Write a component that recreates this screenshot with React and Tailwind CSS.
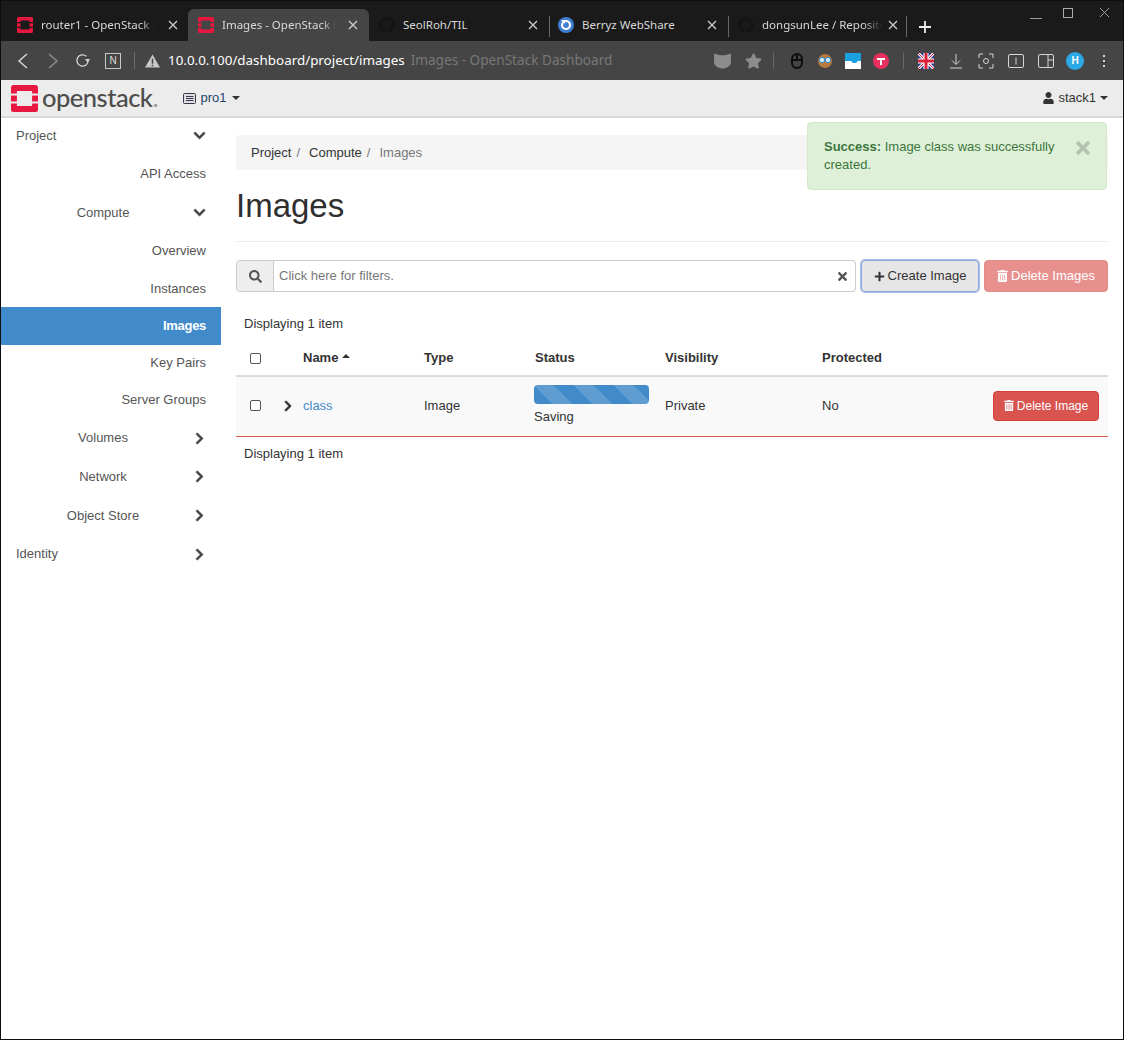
import React from "react";
import {
  FaChevronDown,
  FaChevronRight,
  FaSearch,
  FaTimes,
  FaPlus,
  FaTrashAlt,
  FaUser,
  FaGithub,
  FaStar,
} from "react-icons/fa";

const StackLogo = ({ className }) => (
  <svg viewBox="0 0 32 32" className={className} fill="#e8173f">
    <path d="M3 0H29a3 3 0 0 1 3 3V10H25V7H7V10H0V3a3 3 0 0 1 3-3Z" />
    <path d="M3 32H29a3 3 0 0 0 3-3V22H25V25H7V22H0V29a3 3 0 0 0 3 3Z" />
    <rect x="0" y="12.5" width="7" height="7" />
    <rect x="25" y="12.5" width="7" height="7" />
  </svg>
);

const Close = ({ className }) => (
  <svg viewBox="0 0 12 12" className={className} stroke="#c9c9c9" strokeWidth="1.4" fill="none">
    <path d="M2 2L10 10M10 2L2 10" />
  </svg>
);

const Berryz = () => (
  <svg viewBox="0 0 16 16" className="w-4 h-4">
    <circle cx="8" cy="8" r="8" fill="#3f7fd0" />
    <circle cx="8" cy="8" r="4" fill="none" stroke="#fff" strokeWidth="2.2" />
    <path d="M3 3h4v4z" fill="#fff" />
  </svg>
);

const Tab = ({ icon, title, active, className, textWidth }) => (
  <div
    className={`relative flex items-center h-8 rounded-t-md ${active ? "bg-[#454545]" : ""} ${className}`}
  >
    <span className="flex items-center justify-center w-4 h-4 shrink-0">{icon}</span>
    <span
      className={`ml-2 whitespace-nowrap overflow-hidden text-[11.5px] text-[#d8d8d8] [font-family:'Noto_Sans',sans-serif] ${textWidth}`}
    >
      {title}
    </span>
  </div>
);

const leafClass = "flex items-center justify-end pr-[15px] text-[#555]";

const Section = ({ label, h, open, left }) => (
  <div className={`relative flex items-center ${h} text-[#555]`}>
    {left ? (
      <span className="pl-[15px]">{label}</span>
    ) : (
      <span className="w-[204px] text-center">{label}</span>
    )}
    <span className="absolute left-[192px] text-[#444]">
      {open ? (
        <FaChevronDown className="w-[13px] h-[13px] stroke-current stroke-[25]" />
      ) : (
        <FaChevronRight className="w-[13px] h-[13px] stroke-current stroke-[25]" />
      )}
    </span>
  </div>
);

const Sidebar = () => (
  <aside className="w-[220px] shrink-0">
    <Section label="Project" h="h-[35px]" open left />
    <div className={`${leafClass} h-[41px]`}>API Access</div>
    <Section label="Compute" h="h-[37px]" open />
    <div className={`${leafClass} h-[40px]`}>Overview</div>
    <div className={`${leafClass} h-[36px]`}>Instances</div>
    <div className="flex items-center justify-end pr-[15px] h-[38px] bg-[#428bca] text-white font-bold tracking-[-0.3px]">Images</div>
    <div className={`${leafClass} h-[36px]`}>Key Pairs</div>
    <div className={`${leafClass} h-[37px]`}>Server Groups</div>
    <Section label="Volumes" h="h-[40px]" />
    <Section label="Network" h="h-[37px]" />
    <Section label="Object Store" h="h-[41px]" />
    <Section label="Identity" h="h-[36px]" left />
  </aside>
);

const Checkbox = () => (
  <span className="block w-[11px] h-[11px] border border-[#555] rounded-[2px] bg-white" />
);

const Caret = ({ className }) => (
  <span className={`inline-block w-0 h-0 border-x-4 border-t-4 border-x-transparent border-t-[#333] ${className}`} />
);

const Toolbar = () => (
  <div className="relative flex items-center h-[39px] bg-[#454545] text-[#ddd]">
    <svg viewBox="0 0 12 18" className="w-[12px] h-[18px] ml-[16px]" fill="none" stroke="#d5d5d5" strokeWidth="1.5">
      <path d="M10 2L2 9L10 16" />
    </svg>
    <svg viewBox="0 0 12 18" className="w-[12px] h-[18px] ml-[18px]" fill="none" stroke="#8d8d8d" strokeWidth="1.5">
      <path d="M2 2L10 9L2 16" />
    </svg>
    <svg viewBox="0 0 18 18" className="w-[17px] h-[17px] ml-[15px]" fill="none" stroke="#d5d5d5" strokeWidth="1.4">
      <path d="M15 9a6 6 0 1 1-2-4.5" />
      <path d="M11.5 7.5H17L14.5 11z" fill="#d5d5d5" stroke="none" />
    </svg>
    <span className="ml-[14px] w-[16px] h-[16px] border border-[#c8c8c8] flex items-center justify-center text-[10px] [font-family:'Liberation_Sans',sans-serif]">
      N
    </span>
    <span className="ml-[13px] w-px h-[17px] bg-[#6c6c6c]" />
    <svg viewBox="0 0 16 14" className="ml-[10px] w-[15px] h-[14px]">
      <path d="M8 0L16 14H0Z" fill="#c8c8c8" />
      <path d="M7.2 4.5h1.6V10H7.2zM7.2 11h1.6v1.5H7.2z" fill="#454545" />
    </svg>
    <span className="ml-[8px] whitespace-nowrap text-[13.4px] text-white [font-family:'Noto_Sans',sans-serif]">
      10.0.0.100/dashboard/project/images
    </span>
    <span className="ml-[6px] whitespace-nowrap text-[13.6px] text-[#777] [font-family:'Noto_Sans',sans-serif]">
      Images - OpenStack Dashboard
    </span>
    <div className="ml-auto flex items-center mr-[18px]">
      <svg viewBox="0 0 18 16" className="w-[17px] h-[16px]">
        <path d="M0 0C3 1 6 2 9 2S15 1 18 0V9C18 13 13 16 9 16S0 13 0 9Z" fill="#8c8c8c" />
      </svg>
      <FaStar className="ml-[14px] w-[17px] h-[16px] text-[#8c8c8c]" />
      <span className="ml-[11px] w-px h-[17px] bg-[#666]" />
      <svg viewBox="0 0 12 16" className="ml-[17px] w-[12px] h-[16px]" fill="none" stroke="#0d0d0d" strokeWidth="2">
        <rect x="1" y="1" width="10" height="14" rx="5" />
        <path d="M6 1V7M1 7H11" />
      </svg>
      <svg viewBox="0 0 16 16" className="ml-[14px] w-[16px] h-[16px]">
        <circle cx="8" cy="8" r="7" fill="#b8793d" />
        <circle cx="5" cy="7" r="2.6" fill="#d9eefa" stroke="#2d8bd0" />
        <circle cx="11" cy="7" r="2.6" fill="#d9eefa" stroke="#2d8bd0" />
      </svg>
      <svg viewBox="0 0 16 16" className="ml-[12px] w-[16px] h-[16px]">
        <rect width="16" height="16" fill="#1ba1e2" />
        <path d="M0 8H6L8 10H11L13 8H16V16H0Z" fill="#fff" />
      </svg>
      <svg viewBox="0 0 16 16" className="ml-[12px] w-[16px] h-[16px]">
        <circle cx="8" cy="8" r="8" fill="#e8305e" />
        <path d="M4 5H12V7H9V12H7V7H4Z" fill="#fff" />
      </svg>
      <span className="ml-[14px] w-px h-[17px] bg-[#666]" />
      <svg viewBox="0 0 16 16" className="ml-[14px] w-[16px] h-[16px]">
        <rect width="16" height="16" fill="#2b3a8c" />
        <path d="M0 0L16 16M16 0L0 16" stroke="#fff" strokeWidth="3" />
        <path d="M0 0L16 16M16 0L0 16" stroke="#d8233a" strokeWidth="1" />
        <path d="M8 0V16M0 8H16" stroke="#fff" strokeWidth="5" />
        <path d="M8 0V16M0 8H16" stroke="#d8233a" strokeWidth="3" />
      </svg>
      <svg viewBox="0 0 14 16" className="ml-[15px] w-[14px] h-[16px]" fill="none" stroke="#d5d5d5">
        <path d="M7 1V11M3 7.5L7 11.5L11 7.5M1 15H13" />
      </svg>
      <svg viewBox="0 0 16 16" className="ml-[15px] w-[16px] h-[16px]" fill="none" stroke="#d5d5d5">
        <path d="M1 5V1H5M11 1H15V5M15 11V15H11M5 15H1V11" />
        <circle cx="8" cy="8" r="2.5" />
      </svg>
      <svg viewBox="0 0 16 16" className="ml-[14px] w-[16px] h-[16px]" fill="none" stroke="#d5d5d5">
        <rect x="0.5" y="1.5" width="15" height="13" rx="1.5" />
        <path d="M8 4.5V11.5" />
      </svg>
      <svg viewBox="0 0 16 16" className="ml-[14px] w-[16px] h-[16px]" fill="none" stroke="#d5d5d5">
        <rect x="0.5" y="1.5" width="15" height="13" rx="1.5" />
        <path d="M10 1.5V14.5M10 7H15.5" />
      </svg>
      <span className="ml-[12px] w-[18px] h-[18px] rounded-full bg-[#2aa9e6] flex items-center justify-center text-[10px] font-bold text-white [font-family:'Liberation_Sans',sans-serif]">
        H
      </span>
      <span className="ml-[19px] flex flex-col gap-[3px]">
        <span className="w-[2px] h-[2px] bg-[#d5d5d5]" />
        <span className="w-[2px] h-[2px] bg-[#d5d5d5]" />
        <span className="w-[2px] h-[2px] bg-[#d5d5d5]" />
      </span>
    </div>
  </div>
);

const TabStrip = () => (
  <div className="relative flex items-end h-[40px] bg-[#1a1a1a] pl-[6px]">
    <Tab className="w-[181px] pl-[10px]" textWidth="w-[114px] [mask-image:linear-gradient(to_right,#000_88%,transparent)]" icon={<StackLogo className="w-4 h-4" />} title="router1 - OpenStack Dashboard" />
    <Tab active className="w-[181px] pl-[10px]" textWidth="w-[114px] [mask-image:linear-gradient(to_right,#000_88%,transparent)]" icon={<StackLogo className="w-4 h-4" />} title="Images - OpenStack Dashboard" />
    <Tab className="w-[180px] pl-[10px]" textWidth="w-[112px]" icon={<FaGithub className="w-4 h-4 text-[#141414]" />} title="SeolRoh/TIL" />
    <Tab className="w-[180px] pl-[9px]" textWidth="w-[112px]" icon={<Berryz />} title="Berryz WebShare" />
    <Tab className="w-[177px] pl-[9px]" textWidth="w-[120px] [mask-image:linear-gradient(to_right,#000_85%,transparent)]" icon={<FaGithub className="w-4 h-4 text-[#141414]" />} title="dongsunLee / Repositories" />
    <Close className="absolute left-[166px] top-[18px] w-[12px] h-[12px]" />
    <Close className="absolute left-[346px] top-[18px] w-[12px] h-[12px]" />
    <Close className="absolute left-[526px] top-[18px] w-[12px] h-[12px]" />
    <Close className="absolute left-[705px] top-[18px] w-[12px] h-[12px]" />
    <Close className="absolute left-[886px] top-[18px] w-[12px] h-[12px]" />
    <span className="absolute left-[548px] top-[15px] w-px h-[21px] bg-[#666]" />
    <span className="absolute left-[727px] top-[15px] w-px h-[21px] bg-[#666]" />
    <span className="absolute left-[905px] top-[15px] w-px h-[21px] bg-[#666]" />
    <svg viewBox="0 0 12 12" className="absolute left-[918px] top-[20px] w-[12px] h-[12px]" stroke="#eee" strokeWidth="1.8">
      <path d="M6 0V12M0 6H12" />
    </svg>
    <span className="absolute left-[1029px] top-[17px] w-[12px] h-px bg-[#999]" />
    <span className="absolute left-[1062px] top-[7px] w-[10px] h-[10px] border border-[#aaa]" />
    <svg viewBox="0 0 12 12" className="absolute left-[1098px] top-[6px] w-[11px] h-[11px]" stroke="#aaa" fill="none">
      <path d="M1 1L11 11M11 1L1 11" />
    </svg>
  </div>
);

export default function App() {
  return (
    <div className="relative w-[1124px] h-[1040px] overflow-hidden border border-[#0d0d0d] bg-white text-[13px] text-[#333] [font-family:'Liberation_Sans',Arial,sans-serif]">
      <TabStrip />
      <Toolbar />

      <nav className="flex items-center h-[38px] bg-[#ececec] border-b-2 border-[#d8d8d8]">
        <StackLogo className="ml-[10px] w-[27px] h-[27px]" />
        <span className="ml-[4px] text-[25.5px] leading-none tracking-[-0.5px] font-medium text-[#4d4d4d] [font-family:'Lato',sans-serif]">
          openstack
        </span>
        <span className="text-[25.5px] leading-none text-[#999] [font-family:'Lato',sans-serif]">.</span>
        <svg viewBox="0 0 13 11" className="ml-[24px] w-[13px] h-[11px]">
          <rect x="0.5" y="0.5" width="12" height="10" rx="1" fill="#ddd" stroke="#3d3550" />
          <path d="M3 3.5H10.5M3 5.5H10.5M3 7.5H10.5" stroke="#3d3550" />
        </svg>
        <span className="ml-[5px] text-[#23456b]">pro1</span>
        <Caret className="ml-[5px]" />
        <div className="ml-auto flex items-center mr-[15px]">
          <FaUser className="w-[11px] h-[12px] text-[#333]" />
          <span className="ml-[4px]">stack1</span>
          <Caret className="ml-[4px]" />
        </div>
      </nav>

      <div className="flex">
        <Sidebar />

        <main className="flex-1 pl-[15px] pr-[15px]">
          <ol className="flex items-center mt-[17px] h-[35px] pl-[15px] bg-[#f5f5f5] rounded">
            <li>Project</li>
            <li className="pl-[5px] pr-[9px] text-[#777]">/</li>
            <li>Compute</li>
            <li className="pl-[5px] pr-[9px] text-[#777]">/</li>
            <li className="text-[#777]">Images</li>
          </ol>

          <h1 className="mt-[15px] h-[41px] text-[33px] leading-[41px] font-normal text-[#2f2f2f]">Images</h1>
          <hr className="mt-[15px] border-0 border-t border-[#eee]" />

          <div className="flex mt-[18px] h-[32px]">
            <div className="flex w-[620px]">
              <span className="flex items-center justify-center w-[38px] bg-[#eee] border border-[#ccc] rounded-l">
                <FaSearch className="w-[13px] h-[13px] text-[#555]" />
              </span>
              <div className="flex-1 flex items-center justify-between pl-[5px] pr-[6px] border border-l-0 border-[#ccc] rounded-r text-[#777]">
                <span>Click here for filters.</span>
                <FaTimes className="w-[13px] h-[13px] text-[#555]" />
              </div>
            </div>
            <button
              type="button"
              className="ml-[5px] flex items-center justify-center w-[118px] bg-[#e6e6e6] border border-[#8aa9dc] rounded ring-1 ring-[#a9c2ea]"
            >
              <FaPlus className="w-[11px] h-[11px] mr-[3px]" />
              Create Image
            </button>
            <button
              type="button"
              className="ml-[5px] flex items-center justify-center w-[124px] bg-[#e8908e] border border-[#e48a87] rounded text-white font-medium"
            >
              <FaTrashAlt className="w-[11px] h-[12px] mr-[3px]" />
              Delete Images
            </button>
          </div>

          <div className="mt-[23px] pl-[8px] leading-[17px]">Displaying 1 item</div>

          <div className="mt-[7px] grid grid-cols-[67px_121px_111px_130px_157px_1fr_auto] items-center h-[34px] pt-[2px] border-b-2 border-[#ddd] font-bold box-content">
            <span className="pl-[14px]">
              <Checkbox />
            </span>
            <span className="flex items-center">
              Name
              <span className="ml-[4px] mb-[4px] inline-block w-0 h-0 border-x-4 border-b-4 border-x-transparent border-b-[#333]" />
            </span>
            <span>Type</span>
            <span>Status</span>
            <span>Visibility</span>
            <span>Protected</span>
          </div>

          <div className="grid grid-cols-[67px_121px_111px_130px_157px_1fr_auto] items-center h-[60px] pb-[2px] bg-[#f9f9f9] border-b border-[#d9534f]">
            <span className="flex items-center pl-[14px]">
              <Checkbox />
              <FaChevronRight className="ml-[21px] w-[12px] h-[12px] text-[#333] stroke-current stroke-[30]" />
            </span>
            <span className="text-[#428bca]">class</span>
            <span>Image</span>
            <div className="-ml-px">
              <div className="w-[115px] h-[19px] rounded bg-[#428bca] bg-[linear-gradient(45deg,rgba(255,255,255,0.15)_25%,transparent_25%,transparent_50%,rgba(255,255,255,0.15)_50%,rgba(255,255,255,0.15)_75%,transparent_75%,transparent)] bg-[length:40px_40px]" />
              <div className="mt-[4px] leading-[18px]">Saving</div>
            </div>
            <span>Private</span>
            <span>No</span>
            <div className="flex justify-end pr-[9px]">
              <button
                type="button"
                className="flex items-center justify-center w-[106px] h-[30px] bg-[#d9534f] border border-[#d43f3a] rounded text-[12px] text-white"
              >
                <FaTrashAlt className="w-[10px] h-[11px] mr-[3px]" />
                Delete Image
              </button>
            </div>
          </div>

          <div className="mt-[8px] pl-[8px] leading-[17px]">Displaying 1 item</div>
        </main>
      </div>

      <div className="absolute left-[806px] top-[121px] w-[300px] h-[68px] pl-[16px] pr-[50px] pt-[15px] bg-[#dff0d8] border border-[#d6e9c6] rounded text-[#3c763d] leading-[18px]">
        <strong>Success:</strong> Image class was successfully created.
        <FaTimes className="absolute right-[13px] top-[15px] w-[20px] h-[20px] text-[#b3c2ac]" />
      </div>
    </div>
  );
}
